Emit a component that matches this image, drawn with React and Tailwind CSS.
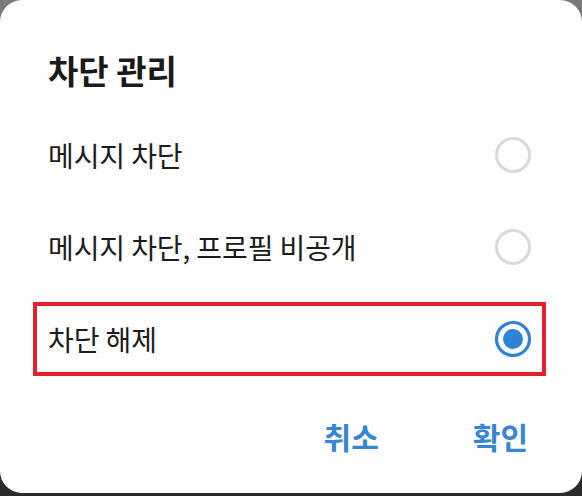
import React from "react";

const font = { fontFamily: '"Noto Sans CJK KR", "Noto Sans", sans-serif' };

function Radio({ checked }) {
  return (
    <svg width="38" height="38" viewBox="0 0 38 38" className="shrink-0">
      {checked ? (
        <>
          <circle cx="19" cy="19" r="16.5" fill="none" stroke="#2f83d6" strokeWidth="3.2" />
          <circle cx="19" cy="19" r="10" fill="#2f83d6" />
        </>
      ) : (
        <circle cx="19" cy="19" r="16.5" fill="none" stroke="#d9d9d9" strokeWidth="3" />
      )}
    </svg>
  );
}

function Row({ label, checked, highlight }) {
  return (
    <div
      className={`flex h-[74px] items-center justify-between pl-[11px] pr-[10px] border-4 ${
        highlight ? "border-[#e3202b]" : "border-transparent"
      }`}
    >
      <span className="text-[28px] leading-none text-[#1c1c1c] tracking-[-0.1px]">{label}</span>
      <Radio checked={checked} />
    </div>
  );
}

export default function App() {
  return (
    <div className="w-[582px] h-[496px] overflow-hidden bg-gradient-to-b from-[#7a7a7a] to-[#2a2a2a]" style={font}>
      <div className="h-[493px] bg-white rounded-[22px] flex flex-col pt-[52px] px-[33px] pr-[36px]">
        <h1 className="pl-[15px] h-[36px] flex items-center text-[33px] font-bold text-[#1a1a1a] leading-none">
          차단 관리
        </h1>
        <div className="mt-[30px] flex flex-col gap-[18px]">
          <Row label="메시지 차단" />
          <Row label="메시지 차단, 프로필 비공개" />
          <Row label="차단 해제" checked highlight />
        </div>
        <div className="mt-[36px] h-[48px] flex items-center justify-end gap-[94px] pr-[18px]">
          <span className="text-[30px] font-bold text-[#3686d4] leading-none">취소</span>
          <span className="text-[30px] font-bold text-[#3686d4] leading-none">확인</span>
        </div>
      </div>
    </div>
  );
}
